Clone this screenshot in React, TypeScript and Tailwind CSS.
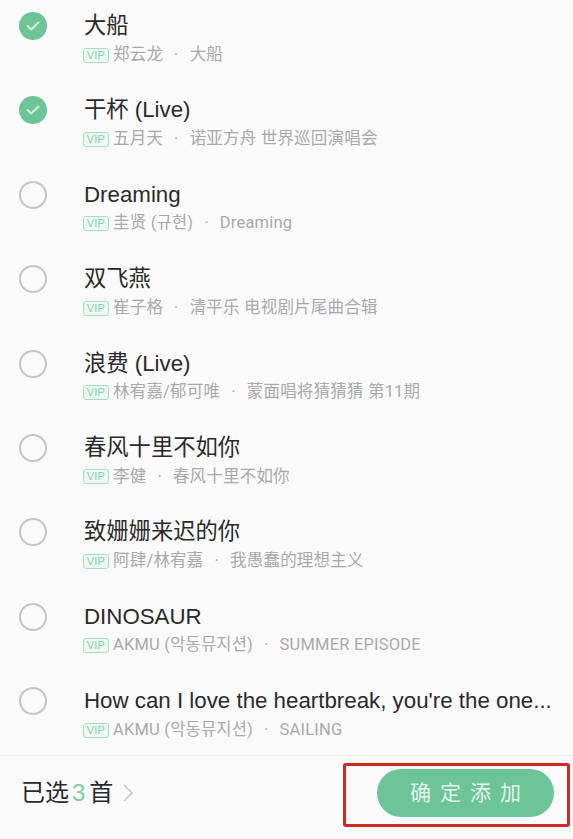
const SANS = 'font-["Liberation_Sans","Noto_Sans_CJK_SC","Noto_Sans_CJK_KR",sans-serif]';

const songs = [
  {title: '大船', sub: '郑云龙', album: '大船', checked: true},
  {title: '干杯 (Live)', sub: '五月天', album: '诺亚方舟 世界巡回演唱会', checked: true},
  {title: 'Dreaming', sub: '圭贤 (규현)', album: 'Dreaming'},
  {title: '双飞燕', sub: '崔子格', album: '清平乐 电视剧片尾曲合辑'},
  {title: '浪费 (Live)', sub: '林宥嘉/郁可唯', album: '蒙面唱将猜猜猜 第11期'},
  {title: '春风十里不如你', sub: '李健', album: '春风十里不如你'},
  {title: '致姗姗来迟的你', sub: '阿肆/林宥嘉', album: '我愚蠢的理想主义'},
  {title: 'DINOSAUR', sub: 'AKMU (악동뮤지션)', album: 'SUMMER EPISODE'},
  {title: "How can I love the heartbreak, you're the one...", sub: 'AKMU (악동뮤지션)', album: 'SAILING'},
];

function CheckMark({checked}: {checked?: boolean}) {
  if (!checked) {
    return <div className="w-[28px] h-[28px] rounded-full border-2 border-[#c4c4c4]" />;
  }
  return (
    <div className="w-[28px] h-[28px] rounded-full bg-[#6cc497] flex items-center justify-center">
      <svg width="16" height="12" viewBox="0 0 16 12" fill="none" stroke="#d5f0e2" strokeWidth="2" strokeLinecap="round" strokeLinejoin="round">
        <path d="M2.5 6l3.8 3.5 7.2-7" />
      </svg>
    </div>
  );
}

function VipTag() {
  return (
    <span className="w-[26px] h-[15px] shrink-0 rounded-[3px] border border-[#a5dcc2] bg-[#eef9f4] text-[#84cfab] text-[11px] leading-[13px] text-center font-['Liberation_Sans',sans-serif]">
      VIP
    </span>
  );
}

function SongRow({song}: {song: (typeof songs)[number]}) {
  return (
    <div className="h-[84.4px] flex items-start pl-[19px]">
      <div className="w-[65px] shrink-0 pt-[12px]">
        <CheckMark checked={song.checked} />
      </div>
      <div className="min-w-0 flex-1">
        <div className="h-[26px] mt-[13px] text-[22.3px] leading-[26px] text-[#2a2a2a] whitespace-nowrap">{song.title}</div>
        <div className="flex items-center mt-[5px] -ml-[1px] h-[22px] text-[16.5px] tracking-[0.2px] text-[#a9a9a9] whitespace-nowrap font-['Roboto','Noto_Sans_CJK_SC','Noto_Sans_CJK_KR',sans-serif]">
          <VipTag />
          <span className="ml-[4px]">{song.sub}</span>
          <span className="mx-[11px]">·</span>
          <span>{song.album}</span>
        </div>
      </div>
    </div>
  );
}

export default function App() {
  return (
    <div className={`w-[573px] h-[839px] overflow-hidden bg-[#fafafa] flex flex-col ${SANS}`}>
      <div className="h-[755px] shrink-0">
        {songs.map(song => (
          <SongRow key={song.title} song={song} />
        ))}
      </div>
      <div className="flex-1 border-t border-[#efefef] flex items-start justify-between pl-[21px] pr-[3px]">
        <div className="flex items-center h-[74px] text-[24px] text-[#2a2a2a]">
          <span>已选</span>
          <span className="ml-[3px] mr-[4px] text-[#7fcba5]">3</span>
          <span>首</span>
          <svg className="ml-[9px]" width="12" height="20" viewBox="0 0 12 20" fill="none" stroke="#c8c8c8" strokeWidth="1.6">
            <path d="M2 2l8 8-8 8" />
          </svg>
        </div>
        <div className="mt-[7px] w-[227px] h-[64px] rounded-[3px] border-[3px] border-[#cc2a22] pl-[31px] pt-[3px]">
          <button className="w-[177px] h-[48px] rounded-full bg-[#6cc497] text-[#e3f5ec] text-[21px] tracking-[9px] pl-[9px]">
            确定添加
          </button>
        </div>
      </div>
    </div>
  );
}
